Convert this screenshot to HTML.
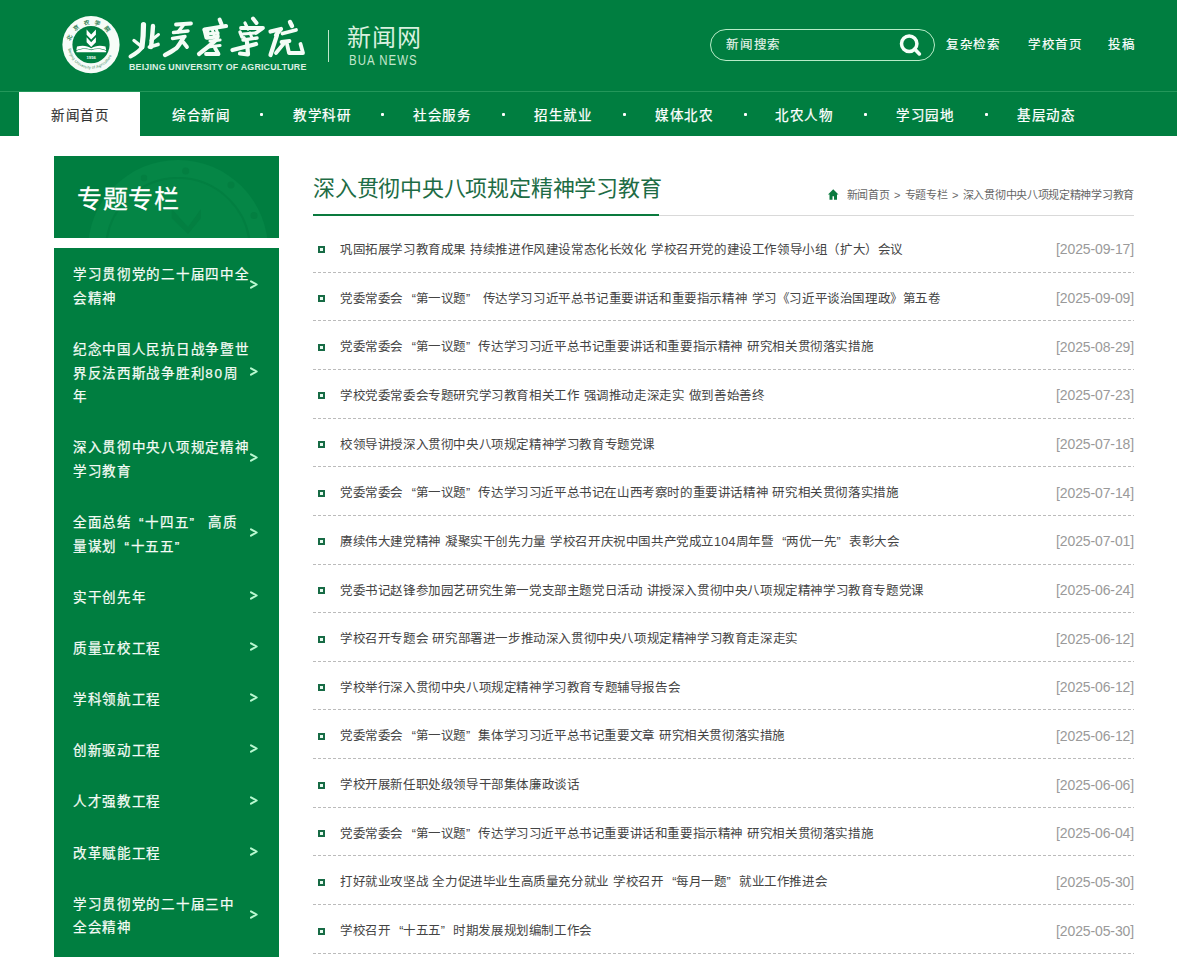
<!DOCTYPE html>
<html lang="zh-CN">
<head>
<meta charset="utf-8">
<title>深入贯彻中央八项规定精神学习教育-北京农学院新闻网</title>
<style>
*{margin:0;padding:0;box-sizing:border-box}
html,body{width:1177px;height:957px;overflow:hidden;background:#fff}
body{font-family:"Liberation Sans",sans-serif;position:relative;color:#333}
.abs{position:absolute}
#hd{left:0;top:0;width:1177px;height:91px;background:#007e40}
#hdline{left:0;top:91px;width:1177px;height:1px;background:#23975a}
#nav{left:0;top:92px;width:1177px;height:44px;background:#007e40}
.ni{position:absolute;top:1.6px;height:44px;width:121px;line-height:44px;text-align:center;color:#fff;font-size:13.5px;-webkit-text-stroke:0.25px #fff;letter-spacing:1.7px;text-indent:1.7px;white-space:nowrap}
.ni.on{top:0;padding-top:1.6px;-webkit-text-stroke:0.15px #333}
.ni.on{background:#fff;color:#333}
.dot{position:absolute;top:21px;width:3px;height:3px;background:#fff;border-radius:1px}
#en{left:129px;top:62px;font-weight:bold;font-size:8.9px;color:#dcefe2;letter-spacing:0.17px;line-height:11px;white-space:nowrap}
#sep{left:328px;top:30px;width:1px;height:32px;background:#bfe6cb}
#xww{left:347px;top:19.5px;font-size:24px;letter-spacing:1.2px;line-height:36px;color:#d8f0df;white-space:nowrap;font-weight:300}
#bua{left:349px;top:51px;font-size:14.3px;line-height:18px;color:#c2e6cc;letter-spacing:1.3px;white-space:nowrap;transform:scaleX(0.8);transform-origin:0 0}
#sbox{left:710px;top:29px;width:225px;height:32px;border:1px solid #b8ecc8;border-radius:16px}
#sph{left:726px;top:37.3px;font-size:12.5px;letter-spacing:0.8px;line-height:17px;color:#e6f4ea;-webkit-text-stroke:0.15px #e6f4ea;white-space:nowrap}
#sic{left:897px;top:33px}
.hl{position:absolute;top:36.6px;font-size:12.5px;letter-spacing:0.6px;line-height:17px;color:#fff;-webkit-text-stroke:0.2px #fff;white-space:nowrap}
#sbh{left:54px;top:156px;width:225px;height:82px;background:#007e40;overflow:hidden}
#sbh h2{position:absolute;left:23px;top:25px;font-size:25px;letter-spacing:0.5px;line-height:36px;font-weight:normal;color:#fff;-webkit-text-stroke:0.3px #fff;white-space:nowrap}
#sbl{left:54px;top:248px;width:225px;height:720px;padding-top:1.6px;background:#007e40}
.si{position:relative;padding:13.85px 0 13.85px 19px;color:#f4fbf5;font-size:13.5px;-webkit-text-stroke:0.25px #f4fbf5;letter-spacing:1.7px;line-height:23.5px;white-space:nowrap}
.si>span{display:block}
.ar{position:absolute;left:195.5px;top:50%;margin-top:-6.6px}
#ttl{left:313px;top:171.8px;font-size:22px;letter-spacing:-0.22px;line-height:34px;color:#1e6c45;white-space:nowrap}
#grl{left:313px;top:215px;width:821px;height:1px;background:#d9d9d9}
#gul{left:313px;top:213.5px;width:346px;height:2.5px;background:#0a7a3e}
#bc{right:43px;top:186.5px;font-size:11px;letter-spacing:-0.3px;word-spacing:1.8px;line-height:17px;color:#666;white-space:nowrap}
#bc svg{vertical-align:-1.5px;margin-right:8px}
#lst{left:313px;top:223.93px;width:821px}
.r{position:relative;height:48.67px}
.r:after{content:"";position:absolute;left:0;right:0;top:47.67px;height:1px;background:linear-gradient(to right,#bbb 60%,transparent 60%) 0 0/5px 1px repeat-x}
.r b{position:absolute;left:5px;top:22.55px;width:7px;height:7px;border:2px solid #176b45;background:#e8fbf0}
.r a{position:absolute;left:27px;top:17px;font-size:12.5px;letter-spacing:-0.4px;word-spacing:1.2px;line-height:18px;color:#444;white-space:nowrap;text-decoration:none}
.r em{position:absolute;right:0px;top:16.4px;font-style:normal;font-size:14px;letter-spacing:-0.12px;line-height:18px;color:#9a9a9a;white-space:nowrap}
.ql{display:inline-block;width:1em;text-align:right}
.qr{display:inline-block;width:1em;text-align:left}
</style>
</head>
<body>
<div id="hd" class="abs"></div>
<div id="hdline" class="abs"></div>
<div id="nav" class="abs">
  <div class="ni on" style="left:19px">新闻首页</div>
  <div class="ni" style="left:140px">综合新闻</div>
  <div class="dot" style="left:260px"></div>
  <div class="ni" style="left:261px">教学科研</div>
  <div class="dot" style="left:381px"></div>
  <div class="ni" style="left:381px">社会服务</div>
  <div class="dot" style="left:502px"></div>
  <div class="ni" style="left:502px">招生就业</div>
  <div class="dot" style="left:623px"></div>
  <div class="ni" style="left:623px">媒体北农</div>
  <div class="dot" style="left:744px"></div>
  <div class="ni" style="left:743px">北农人物</div>
  <div class="dot" style="left:864px"></div>
  <div class="ni" style="left:864px">学习园地</div>
  <div class="dot" style="left:985px"></div>
  <div class="ni" style="left:985px">基层动态</div>
</div>

<!-- logo emblem -->
<svg class="abs" style="left:61px;top:15px" width="60" height="60" viewBox="0 0 60 60">
  <defs>
    <path id="arcT" d="M9.5 30 A20.5 20.5 0 0 1 50.5 30"/>
    <path id="arcB" d="M7.2 31 A22.8 22.8 0 0 0 52.8 31"/>
  </defs>
  <circle cx="30" cy="29.7" r="28.6" fill="#f6fcf8"/>
  <circle cx="30" cy="29.7" r="18.6" fill="#007e40"/>
  <text font-family="Liberation Serif,serif" font-size="5.6" font-weight="bold" fill="#2d7f52" letter-spacing="4.3"><textPath href="#arcT" startOffset="6%">北京农学院</textPath></text>
  <text font-family="Liberation Sans,sans-serif" font-size="4" fill="#3c8a5e" letter-spacing="0.1"><textPath href="#arcB" startOffset="4%">Beijing University of Agriculture</textPath></text>
  <path d="M25.6 14.6 L30.2 19.6 L34.9 14.6 L34.9 19.8 L30.2 24.6 L25.6 19.8 Z" fill="#fff"/>
  <path d="M25.6 22.2 L30.2 27.2 L34.9 22.2 L34.9 27.2 L30.2 32 L25.6 27.2 Z" fill="#fff"/>
  <path d="M15.3 36 C20 33.8 26 33.5 30.2 35.2 C34.5 33.5 40.5 33.8 45.2 36 L45 37.2 L30.2 37.2 L15.5 37.2 Z" fill="#fff"/>
  <path d="M16 31.5 C21 30 26.5 30.5 30.2 33.2 C34 30.5 39.5 30 44.5 31.5 L45.2 35.2 C40.5 33 34.5 33 30.2 34.6 C26 33 20 33 15.3 35.2 Z" fill="#fff"/>
  <text x="30.2" y="43.6" text-anchor="middle" font-family="Liberation Sans,sans-serif" font-size="4.2" font-weight="bold" fill="#fff">1956</text>
</svg>
<svg class="abs" style="left:0;top:0" width="320" height="80" viewBox="0 0 320 80"><g fill="none" stroke="#f4fcf6" stroke-linecap="round" stroke-linejoin="round">
  <path d="M143.5 24.5 C143.5 32 143 40 142 47" stroke-width="5.2"/>
  <path d="M142 47 C140 51 135 54 130.5 56.5" stroke-width="4"/>
  <path d="M134 40.5 L141.5 46.5" stroke-width="3.4"/>
  <path d="M153 26 C152.5 33 152 40 151 47" stroke-width="4.4"/>
  <path d="M158.5 34.5 L151 40.5" stroke-width="3"/>
  <path d="M149.5 47 L158 44.5" stroke-width="3.8"/>

  <path d="M176 24.5 L191 23.5" stroke-width="3.8"/>
  <path d="M183.5 25 L178 32" stroke-width="3.4"/>
  <path d="M173.5 32.5 L188 31" stroke-width="3.4"/>
  <path d="M172.5 38.5 L185 36.5" stroke-width="3.4"/>
  <path d="M183.5 37.5 C181 42 178.5 46.5 176 48.5 C172 51 168.5 53.5 165 55" stroke-width="4.4"/>
  <path d="M183.5 42.5 L187 47" stroke-width="3.8"/>

  <path d="M219.6 19.5 L221.6 24.5" stroke-width="4"/>
  <path d="M212 29 L214.5 36" stroke-width="3"/>
  <path d="M216 28 L218 35" stroke-width="3"/>
  <path d="M204 30 L206 38" stroke-width="3"/>
  <path d="M204.5 29.5 L226 26" stroke-width="4.2"/>
  <path d="M207.5 29.5 L207.5 36.5" stroke-width="3.8"/>
  <path d="M205.5 34 L218 33" stroke-width="3.2"/>
  <path d="M207.5 38 L218 36.5" stroke-width="3.6"/>
  <path d="M217 39 C212 44 204 50 199 54" stroke-width="4.2"/>
  <path d="M210 41 L220 40" stroke-width="3.2"/>
  <path d="M208 47 L220 45.5" stroke-width="3.2"/>
  <path d="M206 54 L218 54" stroke-width="3.8"/>
  <path d="M215 48 L218.5 54" stroke-width="3.8"/>

  <path d="M253 18.5 L256.5 23" stroke-width="4"/>
  <path d="M245 23 L248 29" stroke-width="3.2"/>
  <path d="M250 33 L252 38" stroke-width="3"/>
  <path d="M244 37.5 L246 41" stroke-width="3"/>
  <path d="M241 28 L263 28 L256 33" stroke-width="3.8"/>
  <path d="M240 32 L242 37" stroke-width="3.4"/>
  <path d="M243 34 L255 33" stroke-width="3.2"/>
  <path d="M243 40 L257 38" stroke-width="3.4"/>
  <path d="M232.5 50 L256 44" stroke-width="4.2"/>
  <path d="M247 42 L248 54.5 L240 53.5" stroke-width="4.2"/>

  <path d="M270.5 31.5 L281 29 L276 35" stroke-width="4.2"/>
  <path d="M277 35 L270.5 55" stroke-width="4.2"/>
  <path d="M290 22 L292 26" stroke-width="4.4"/>
  <path d="M282.5 33.5 L296 30" stroke-width="3.8"/>
  <path d="M281.5 42 L289.5 41" stroke-width="3.8"/>
  <path d="M285 42 L276 53" stroke-width="3.8"/>
  <path d="M287 44 L289 53 L303 53 L300.5 44" stroke-width="3.8"/>
</g></svg>
<div id="en" class="abs">BEIJING UNIVERSITY OF AGRICULTURE</div>
<div id="sep" class="abs"></div>
<div id="xww" class="abs">新闻网</div>
<div id="bua" class="abs">BUA NEWS</div>

<div id="sbox" class="abs"></div>
<div id="sph" class="abs">新闻搜索</div>
<svg id="sic" class="abs" width="28" height="26" viewBox="0 0 28 26">
  <circle cx="12.2" cy="10.7" r="7.7" fill="none" stroke="#f4fff8" stroke-width="3.5"/>
  <path d="M17.6 16.1 L22.4 20.9" stroke="#f4fff8" stroke-width="3.6" stroke-linecap="round"/>
</svg>
<div class="hl" style="left:946px">复杂检索</div>
<div class="hl" style="left:1028px">学校首页</div>
<div class="hl" style="left:1108px">投稿</div>

<!-- sidebar -->
<div id="sbh" class="abs">
  <svg class="abs" style="left:0;top:0" width="225" height="82" viewBox="0 0 225 82">
    <circle cx="124" cy="94" r="90" fill="#058646"/>
    <circle cx="124" cy="94" r="72" fill="#048545" stroke="#027f41" stroke-width="2"/>
    <path d="M117.8 53 L134 71 L147 53 L147 62 L134 78 L117.8 62 Z" fill="#037f41"/>
    <g fill="#037f41"><circle cx="131.7" cy="15" r="3.5"/><circle cx="177" cy="29" r="3.5"/><circle cx="200" cy="59.5" r="3.5"/><circle cx="90" cy="22" r="3.2"/><circle cx="60" cy="42" r="3.2"/></g>
  </svg>
  <h2>专题专栏</h2>
</div>
<div id="sbl" class="abs">
  <div class="si"><span>学习贯彻党的二十届四中全<br>会精神</span><svg class="ar" width="9" height="9" viewBox="0 0 9 9"><path d="M1 1.3 L6.7 4.5 L1 7.7" fill="none" stroke="#b8f8d0" stroke-width="2" stroke-linecap="round" stroke-linejoin="round"/></svg></div>
  <div class="si"><span>纪念中国人民抗日战争暨世<br>界反法西斯战争胜利80周<br>年</span><svg class="ar" width="9" height="9" viewBox="0 0 9 9"><path d="M1 1.3 L6.7 4.5 L1 7.7" fill="none" stroke="#b8f8d0" stroke-width="2" stroke-linecap="round" stroke-linejoin="round"/></svg></div>
  <div class="si"><span>深入贯彻中央八项规定精神<br>学习教育</span><svg class="ar" width="9" height="9" viewBox="0 0 9 9"><path d="M1 1.3 L6.7 4.5 L1 7.7" fill="none" stroke="#b8f8d0" stroke-width="2" stroke-linecap="round" stroke-linejoin="round"/></svg></div>
  <div class="si"><span>全面总结<span class="ql">“</span>十四五<span class="qr">”</span> 高质<br>量谋划<span class="ql">“</span>十五五<span class="qr">”</span></span><svg class="ar" width="9" height="9" viewBox="0 0 9 9"><path d="M1 1.3 L6.7 4.5 L1 7.7" fill="none" stroke="#b8f8d0" stroke-width="2" stroke-linecap="round" stroke-linejoin="round"/></svg></div>
  <div class="si"><span>实干创先年</span><svg class="ar" width="9" height="9" viewBox="0 0 9 9"><path d="M1 1.3 L6.7 4.5 L1 7.7" fill="none" stroke="#b8f8d0" stroke-width="2" stroke-linecap="round" stroke-linejoin="round"/></svg></div>
  <div class="si"><span>质量立校工程</span><svg class="ar" width="9" height="9" viewBox="0 0 9 9"><path d="M1 1.3 L6.7 4.5 L1 7.7" fill="none" stroke="#b8f8d0" stroke-width="2" stroke-linecap="round" stroke-linejoin="round"/></svg></div>
  <div class="si"><span>学科领航工程</span><svg class="ar" width="9" height="9" viewBox="0 0 9 9"><path d="M1 1.3 L6.7 4.5 L1 7.7" fill="none" stroke="#b8f8d0" stroke-width="2" stroke-linecap="round" stroke-linejoin="round"/></svg></div>
  <div class="si"><span>创新驱动工程</span><svg class="ar" width="9" height="9" viewBox="0 0 9 9"><path d="M1 1.3 L6.7 4.5 L1 7.7" fill="none" stroke="#b8f8d0" stroke-width="2" stroke-linecap="round" stroke-linejoin="round"/></svg></div>
  <div class="si"><span>人才强教工程</span><svg class="ar" width="9" height="9" viewBox="0 0 9 9"><path d="M1 1.3 L6.7 4.5 L1 7.7" fill="none" stroke="#b8f8d0" stroke-width="2" stroke-linecap="round" stroke-linejoin="round"/></svg></div>
  <div class="si"><span>改革赋能工程</span><svg class="ar" width="9" height="9" viewBox="0 0 9 9"><path d="M1 1.3 L6.7 4.5 L1 7.7" fill="none" stroke="#b8f8d0" stroke-width="2" stroke-linecap="round" stroke-linejoin="round"/></svg></div>
  <div class="si"><span>学习贯彻党的二十届三中<br>全会精神</span><svg class="ar" width="9" height="9" viewBox="0 0 9 9"><path d="M1 1.3 L6.7 4.5 L1 7.7" fill="none" stroke="#b8f8d0" stroke-width="2" stroke-linecap="round" stroke-linejoin="round"/></svg></div>
</div>

<!-- content -->
<div id="ttl" class="abs">深入贯彻中央八项规定精神学习教育</div>
<div id="grl" class="abs"></div>
<div id="gul" class="abs"></div>
<div id="bc" class="abs"><svg width="10.5" height="11" viewBox="0 0 10.5 11"><path d="M5.25 0.3 L10.5 5.6 L9 5.6 L9 10.8 L6 10.8 L6 7.3 L4.5 7.3 L4.5 10.8 L1.5 10.8 L1.5 5.6 L0 5.6 Z" fill="#0a7a3e"/></svg>新闻首页 &gt; 专题专栏 &gt; 深入贯彻中央八项规定精神学习教育</div>

<div id="lst" class="abs">
  <div class="r"><b></b><a>巩固拓展学习教育成果 持续推进作风建设常态化长效化 学校召开党的建设工作领导小组（扩大）会议</a><em>[2025-09-17]</em></div>
  <div class="r"><b></b><a>党委常委会<span class="ql">“</span>第一议题<span class="qr">”</span> 传达学习习近平总书记重要讲话和重要指示精神 学习《习近平谈治国理政》第五卷</a><em>[2025-09-09]</em></div>
  <div class="r"><b></b><a>党委常委会<span class="ql">“</span>第一议题<span class="qr">”</span>传达学习习近平总书记重要讲话和重要指示精神 研究相关贯彻落实措施</a><em>[2025-08-29]</em></div>
  <div class="r"><b></b><a>学校党委常委会专题研究学习教育相关工作 强调推动走深走实 做到善始善终</a><em>[2025-07-23]</em></div>
  <div class="r"><b></b><a>校领导讲授深入贯彻中央八项规定精神学习教育专题党课</a><em>[2025-07-18]</em></div>
  <div class="r"><b></b><a>党委常委会<span class="ql">“</span>第一议题<span class="qr">”</span>传达学习习近平总书记在山西考察时的重要讲话精神 研究相关贯彻落实措施</a><em>[2025-07-14]</em></div>
  <div class="r"><b></b><a>赓续伟大建党精神 凝聚实干创先力量 学校召开庆祝中国共产党成立<span style="letter-spacing:0.3px">104</span>周年暨<span class="ql">“</span>两优一先<span class="qr">”</span>表彰大会</a><em>[2025-07-01]</em></div>
  <div class="r"><b></b><a>党委书记赵锋参加园艺研究生第一党支部主题党日活动 讲授深入贯彻中央八项规定精神学习教育专题党课</a><em>[2025-06-24]</em></div>
  <div class="r"><b></b><a>学校召开专题会 研究部署进一步推动深入贯彻中央八项规定精神学习教育走深走实</a><em>[2025-06-12]</em></div>
  <div class="r"><b></b><a>学校举行深入贯彻中央八项规定精神学习教育专题辅导报告会</a><em>[2025-06-12]</em></div>
  <div class="r"><b></b><a>党委常委会<span class="ql">“</span>第一议题<span class="qr">”</span>集体学习习近平总书记重要文章 研究相关贯彻落实措施</a><em>[2025-06-12]</em></div>
  <div class="r"><b></b><a>学校开展新任职处级领导干部集体廉政谈话</a><em>[2025-06-06]</em></div>
  <div class="r"><b></b><a>党委常委会<span class="ql">“</span>第一议题<span class="qr">”</span>传达学习习近平总书记重要讲话和重要指示精神 研究相关贯彻落实措施</a><em>[2025-06-04]</em></div>
  <div class="r"><b></b><a>打好就业攻坚战 全力促进毕业生高质量充分就业 学校召开<span class="ql">“</span>每月一题<span class="qr">”</span>就业工作推进会</a><em>[2025-05-30]</em></div>
  <div class="r"><b></b><a>学校召开<span class="ql">“</span>十五五<span class="qr">”</span>时期发展规划编制工作会</a><em>[2025-05-30]</em></div>
</div>
</body>
</html>
